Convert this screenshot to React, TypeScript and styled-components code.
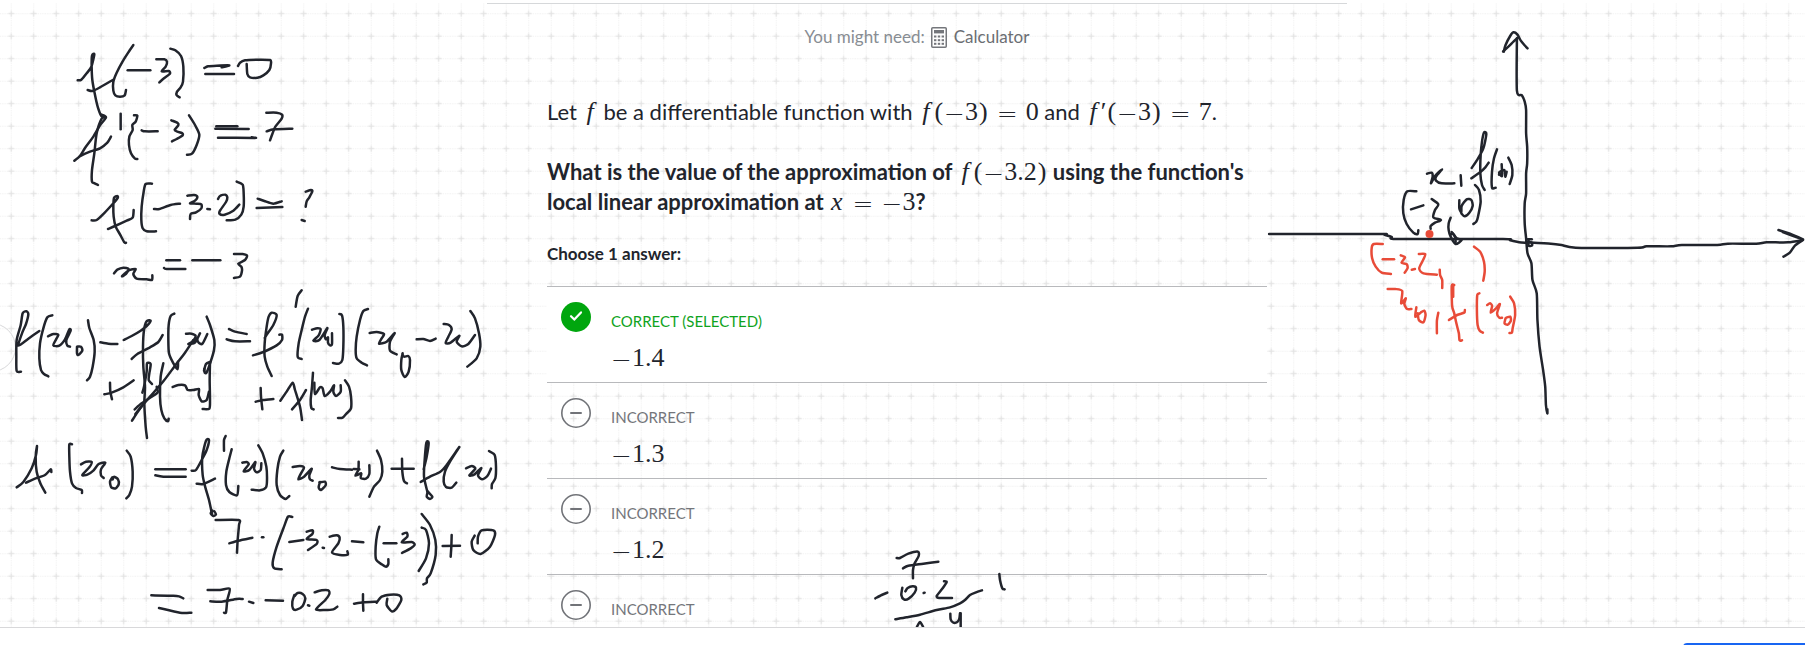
import React from 'react';
import styled, { createGlobalStyle } from 'styled-components';

const ink = '#21242c';
const red = '#e84b38';

const GlobalStyle = createGlobalStyle`
  *, *::before, *::after { box-sizing: border-box; }
  body {
    margin: 0;
    background: #fff;
    color: ${ink};
    font-family: Lato, 'Liberation Sans', sans-serif;
  }
`;

const Page = styled.div`
  display: flex;
  flex-direction: column;
  height: 100vh;
  overflow: hidden;
`;

const Board = styled.main`
  position: relative;
  flex: 1;
  min-height: 0;
  overflow: hidden;
  padding: 3px 0 0 29px;
  border-bottom: 1px solid #d8d8da;
`;

const Backdrop = styled.svg`
  position: absolute;
  inset: 3px 0 0 0;
  width: 100%;
  height: 100%;
`;

const Ink = styled.svg`
  position: absolute;
  top: 0;
  left: 0;
  width: 100%;
  height: 100%;
  pointer-events: none;
  fill: none;
  stroke-linecap: round;
  stroke-linejoin: round;
`;

const SideHandle = styled.button`
  position: absolute;
  top: 323px;
  left: -33px;
  width: 49px;
  height: 49px;
  border: 1px solid #d8d8da;
  border-radius: 50%;
  background: transparent;
  padding: 0;
`;

const Exercise = styled.article`
  position: relative;
  max-width: 860px;
  margin: 0 auto;
  padding: 21px 80px 0 60px;
  border-top: 1px solid #d6d8da;
`;

const Tools = styled.p`
  display: flex;
  justify-content: center;
  align-items: center;
  gap: 6px;
  margin: 0 0 48px;
  padding-left: 20px;
  font-size: 17px;
  line-height: 24px;
  color: #888d93;
`;

const ToolName = styled.span`
  display: inline-flex;
  align-items: center;
  gap: 7px;
  color: #6b6e73;
`;

const Question = styled.p<{ $strong?: boolean }>`
  margin: 0 0 ${(p) => (p.$strong ? 25 : 30)}px;
  font-size: 22px;
  line-height: 30px;
  font-weight: ${(p) => (p.$strong ? 700 : 400)};
`;

const Math = styled.span`
  font-family: 'Liberation Serif', serif;
  font-size: 26px;
  line-height: 30px;
  font-weight: 400;
  white-space: nowrap;
`;

const Variable = styled.i<{ $f?: boolean }>`
  margin: 0 ${(p) => (p.$f ? 4 : 2)}px;
`;

const Paren = styled.span`
  margin: 0 1px;
`;

const Sign = styled.span<{ $relation?: boolean }>`
  margin: 0 ${(p) => (p.$relation ? 8 : 0)}px;
  font-family: 'DejaVu Sans', sans-serif;
  font-weight: 200;
  font-size: 25px;
  line-height: 1px;
  vertical-align: -2px;
`;

const Prompt = styled.h2`
  margin: 0 0 20px;
  font-size: 17px;
  line-height: 24px;
  font-weight: 700;
`;

const Choices = styled.ul`
  list-style: none;
  margin: 0;
  padding: 0;
  border-top: 1px solid #b8b9bc;
`;

const Choice = styled.li<{ $correct?: boolean }>`
  border-bottom: 1px solid #b8b9bc;
  background: ${(p) => (p.$correct ? '#fff' : 'transparent')};
`;

const ChoiceButton = styled.button`
  display: flex;
  align-items: flex-start;
  gap: 20px;
  width: 100%;
  padding: 15px 14px 9px;
  border: 0;
  background: none;
  color: inherit;
  font: inherit;
  text-align: left;
`;

const ChoiceText = styled.span`
  display: flex;
  flex-direction: column;
  gap: 12px;
  padding-top: 9px;
`;

const Verdict = styled.span<{ $correct?: boolean }>`
  font-size: 15px;
  line-height: 20px;
  color: ${(p) => (p.$correct ? '#0fa31d' : '#74767b')};
`;

const Footer = styled.footer`
  display: flex;
  justify-content: flex-end;
  height: 17px;
  padding-top: 15px;
  background: #fff;
  overflow: hidden;
`;

const CheckBar = styled.button`
  flex: none;
  width: 122px;
  height: 40px;
  border: 0;
  border-radius: 4px 0 0 4px;
  background: #1865f2;
`;

const CalculatorIcon = () => (
  <svg width="16" height="21" viewBox="0 0 16 21" aria-hidden="true">
    <rect x="0.75" y="0.75" width="14.5" height="19.5" rx="1" fill="#fff" stroke="#74767b" strokeWidth="1.5" />
    <rect x="3" y="3" width="10" height="3.4" fill="#74767b" />
    {[8.5, 12.2, 15.8].map((y) =>
      [3, 6.8, 10.6].map((x) => <rect key={`${x}-${y}`} x={x} y={y} width="2.4" height="2" fill="#74767b" />),
    )}
  </svg>
);

const VerdictIcon = ({ correct }: { correct?: boolean }) => (
  <svg width="30" height="30" viewBox="0 0 30 30" fill="none" strokeLinecap="round" aria-hidden="true">
    {correct ? (
      <>
        <circle cx="15" cy="15" r="15" fill="#00a60e" />
        <path d="M10 14.2 L13.3 17.6 L20 10.4" stroke="#fff" strokeWidth="2.2" strokeLinejoin="round" />
      </>
    ) : (
      <>
        <circle cx="15" cy="15" r="14.2" stroke="#717378" strokeWidth="1.6" />
        <path d="M10 15 H20" stroke="#717378" strokeWidth="2" />
      </>
    )}
  </svg>
);

/* Turns a list of pen samples into a smooth curve through every one of them. */
function penPath(samples: string) {
  const pts = samples.split(' ').map((s) => s.split(',').map(Number));
  let d = `M${pts[0][0]} ${pts[0][1]}`;
  if (pts.length === 2) return `${d}L${pts[1][0]} ${pts[1][1]}`;
  for (let i = 0; i < pts.length - 1; i++) {
    const p0 = pts[i - 1] ?? pts[i];
    const p1 = pts[i];
    const p2 = pts[i + 1];
    const p3 = pts[i + 2] ?? p2;
    const k = 8;
    d += `C${p1[0] + (p2[0] - p0[0]) / k} ${p1[1] + (p2[1] - p0[1]) / k} ${p2[0] - (p3[0] - p1[0]) / k} ${p2[1] - (p3[1] - p1[1]) / k} ${p2[0]} ${p2[1]}`;
  }
  return d;
}

type Sheet = { x: number; y: number; zoomX: number; color: string; strokes: string[] };

/* Pen samples are taken at three units to the pixel, relative to each sheet's corner. */
const sheets: Sheet[] = [
  {
    x: 0, y: 0, zoomX: 3, color: ink,
    strokes: [
      // f(-3) = 0
      '233,241 244,239 260,220 274,200 283,163 276,167 275,200 277,240 284,280 293,320 304,348 316,352',
      '263,270 277,273 300,262 338,240',
      '400,135 385,157 368,184 350,218 340,245 340,272 346,286 360,290 374,286 378,270',
      '383,211 451,211',
      '469,178 493,178 501,185 497,200 485,214 506,213 510,221 492,235 478,247',
      '511,146 526,151 543,168 550,200 549,245 542,262 531,275 530,286 539,292',
      '613,204 624,199 650,197 688,196 665,202',
      '616,222 702,222',
      '714,198 720,188 735,181 775,179 810,180 813,190 808,210 790,226 772,233 750,232 742,222 740,192',
      // f'(-3) = 7
      '304,344 318,352 300,376 280,410 255,444 240,468 223,482',
      '316,352 305,356 290,400 283,460 276,510 276,545 284,550 294,555',
      '240,468 270,455 300,445 322,428 333,410',
      '362,341 362,388',
      '402,346 412,347 407,365 397,375 398,390 388,410 387,435 393,460 405,476 412,477',
      '425,391 435,394 473,394',
      '514,361 533,369 535,376 524,390 532,395 546,399 548,406 530,417 516,424',
      '567,346 585,375 598,404 590,435 576,461 561,464',
      '649,379 712,379', '646,386 746,387', '654,413 764,414 755,412',
      '799,338 830,338 846,344 845,356 826,380 817,402 810,421',
      '800,394 822,388 877,386',
      // f(-3.2) = ?
      '275,661 290,660 312,640 338,612 353,594 352,588 342,594 340,620 341,650 347,680 360,703 373,727 378,728',
      '324,687 345,678 380,662 398,653 401,630',
      '456,551 437,552 431,575 425,620 424,660 428,685 440,694 468,694',
      '462,627 478,627 512,615 540,611',
      '562,587 582,585 592,590 585,602 570,610 590,611 604,613 604,625 588,637 572,642 570,657',
      '622,627 630,628',
      '654,597 660,588 676,584 682,592 678,606 660,632 659,642 674,644 700,632 718,614',
      '710,545 728,554 731,580 731,620 724,644 706,659 680,661',
      '773,596 793,603 820,611 845,604', '770,624 847,621',
      '917,575 933,570 937,574 928,592 920,604 917,620', '905,660 914,663',
    ],
  },
  {
    x: 0, y: 200, zoomX: 3, color: ink,
    strokes: [
      // x = -3
      '342,220 352,209 370,203 386,207 378,222 366,229 385,212 407,207 400,222 410,236 440,238 456,240 457,226',
      '499,181 540,181', '492,204 500,207 556,207', '577,181 661,181',
      '702,162 728,162 741,167 735,180 715,191 724,200 726,212 720,230 702,234',
      // f(x0) - f(x) = f'(x)(x0 - x)
      '63,515 50,513 49,470 50,420 62,376 68,340 79,334 85,343 78,372 66,400 55,437 85,416 118,393',
      '157,346 142,352 130,385 120,430 118,475 123,510 132,522 145,529',
      '144,409 160,402 175,404 170,415 160,436 178,437 195,418 208,388 212,392 199,420 202,437 210,440',
      '231,440 243,440 247,452 235,465 231,460 231,440',
      '264,361 268,384 281,420 284,455 278,500 270,530 261,541',
      '301,427 325,431 352,432',
      '371,420 395,408 422,392 440,378 452,362 440,364 432,390 429,440 430,500 435,560 433,610 437,680 441,714',
      '395,477 412,462 450,442 475,426 488,405',
      '523,341 512,348 506,375 505,420 507,460 519,488 533,508 534,485',
      '558,401 575,401 587,408 578,425 565,432 585,428 600,400 592,418 598,430 608,430 622,402',
      '580,420 555,458 525,497 490,544 450,590 420,625 406,642',
      '620,350 630,375 643,420 642,450 632,485 620,517 614,518 613,506',
      '687,387 705,395 740,402', '680,418 705,424 750,424',
      '759,466 790,456 830,436 846,420 846,404 838,404',
      '794,414 803,400 820,375 830,345 815,338 806,350 800,380 794,430 794,470 802,500 815,528',
      '905,271 893,288 887,320',
      '924,326 915,350 905,390 896,430 893,470 905,477',
      '936,389 952,385 962,388 956,406 940,422 958,420 982,384 974,406 978,418 984,412 984,428 990,436 996,432 996,400',
      '1018,342 1026,346 1030,380 1030,440 1027,480 1017,491 999,489',
      '1104,327 1090,333 1080,360 1070,410 1067,450 1070,475 1085,488 1101,496',
      '1109,399 1130,396 1152,402 1145,415 1137,431 1160,425 1184,399 1170,425 1170,452 1190,463',
      '1208,460 1204,480 1204,510 1214,531 1226,515 1230,480 1225,468 1212,470 1207,462',
      '1250,418 1270,417 1290,423 1307,416',
      '1331,372 1347,375 1355,388 1345,410 1337,429 1352,428 1378,407 1370,425 1385,439 1405,432 1425,405',
      '1411,333 1425,355 1437,400 1441,440 1430,475 1402,500',
      // + f(x) on both sides
      '330,548 331,575 336,598', '313,583 335,578 370,562 401,541',
      '404,628 425,610 455,590 473,577 470,560',
      '427,578 432,560 440,515 441,490 452,492 448,520 446,540 456,552',
      '490,490 482,530 480,590 484,630 493,655 504,664 506,656',
      '396,662 410,640 424,620',
      '518,561 535,555 555,556 563,570 580,570 597,567 596,585 605,604 620,600 627,575',
      '630,486 629,540 630,600 628,626 608,627', '630,486 618,492 612,512',
      '782,564 783,590 787,628', '767,605 790,600 820,597',
      '841,602 860,575 878,548 885,570 900,620 906,660', '876,628 900,600 918,570',
      '939,518 936,560 932,600 934,624 941,628',
      '943,548 945,582 960,562 968,565 974,588 990,575 1002,556 1000,575 1008,588 1022,575 1022,556',
      '1035,541 1047,560 1053,590 1053,625 1040,640 1028,653 1014,654',
    ],
  },
  {
    x: 0, y: 400, zoomX: 3, color: ink,
    strokes: [
      // f(x0) = f'(x)(x0 - x) + f(x)
      '50,262 70,246 95,205 108,165 111,138 107,170 110,215 121,250 136,278', '78,248 105,236 135,225 152,208 154,216',
      '216,133 208,133 208,170 210,215 216,250 228,264 245,270 246,279',
      '243,193 258,185 275,186 268,202 247,225 262,224 280,212 296,192 316,188 303,208 303,226 311,234',
      '337,232 330,245 334,262 347,265 356,253 354,238 342,230 338,238',
      '380,152 392,170 398,215 396,260 388,285 379,295',
      '466,208 557,208', '466,226 490,230 557,230',
      '575,212 588,210 605,180 620,150 627,120 618,122 607,170 608,225 616,262 627,300 636,342',
      '590,251 610,252 645,236', '637,332 632,340 640,348 648,343 643,334',
      '677,108 672,120 672,152',
      '695,148 688,175 679,215 678,255 688,276 711,286 715,258',
      '727,188 740,186 746,193 731,214 748,210 766,186 762,206 770,217 782,210 784,190',
      '775,136 788,160 799,200 801,240 798,262 780,271 755,269',
      '850,152 840,170 832,210 830,255 840,285 856,297 868,288',
      '878,201 900,198 912,203 903,220 895,238 912,230 935,206 928,226 930,238 938,242',
      '958,247 975,245 977,256 963,270 956,262 960,246',
      '996,202 1020,207 1056,209',
      '1076,185 1075,210 1066,227 1084,220 1082,234 1098,236 1108,222 1108,196', '1061,207 1078,208',
      '1131,152 1143,180 1147,215 1140,240 1122,260 1108,290',
      '1206,176 1207,215 1212,243 1221,250', '1175,206 1241,206',
      '1271,208 1280,170 1286,128 1279,128 1274,180 1272,230 1282,275', '1283,276 1280,290 1290,297 1297,290 1284,275',
      '1262,246 1290,230 1320,216 1340,195 1378,141 1350,185 1335,215 1331,245 1338,261 1355,263 1369,248',
      '1398,205 1415,198 1426,206 1408,226 1422,224 1444,204 1434,226 1446,238 1462,228 1473,206',
      '1467,153 1484,165 1488,200 1486,235 1476,252 1475,265',
      // 7 . (-3.2 - (-3)) + 0
      '647,360 716,360 717,375 713,420 711,458', '688,430 715,422 757,413', '786,412 790,412',
      '877,351 864,350 852,380 830,440 818,488 823,505 845,508',
      '868,426 910,420',
      '920,395 938,391 937,402 920,417 950,420 950,432 924,450', '968,443 972,444',
      '989,410 1010,406 1019,413 1015,430 996,457 1020,465 1043,464 1042,454', '1056,424 1090,427',
      '1138,380 1132,400 1127,440 1128,478 1145,493 1158,500 1165,492 1165,478',
      '1151,430 1189,430',
      '1208,402 1220,398 1222,410 1205,427 1235,426 1244,434 1232,445 1206,459',
      '1265,383 1278,390 1287,430 1278,475 1256,513',
      '1265,342 1290,375 1306,420 1307,465 1292,520 1281,535 1280,548 1270,553',
      '1355,405 1354,440 1352,470', '1328,438 1380,437',
      '1424,407 1415,425 1420,450 1442,462 1470,440 1485,405 1480,391 1445,391 1434,410 1433,430',
      // = 7 . -0.2 + 0
      '454,586 520,587 537,589 550,595', '477,624 540,638 574,638',
      '623,570 660,570 689,566 682,600 678,637 672,638', '631,604 665,605 710,597 728,597', '747,605 760,609',
      '797,601 849,602', '883,585 877,605 879,626 890,629 908,618 916,595 908,582 893,579 884,588', '924,616 928,617',
      '944,577 965,571 985,571 988,582 976,600 948,628 975,630 1000,628 1012,620',
      '1089,583 1089,608 1090,632', '1062,611 1090,607 1130,605',
      '1130,608 1145,590 1170,584 1198,586 1204,600 1190,625 1175,634 1160,615 1162,596',
    ],
  },
  {
    x: 840, y: 520, zoomX: 3, color: ink,
    strokes: [
      // 7 x -0.2 carried out by hand
      '170,114 180,114 205,101 234,95 236,108 224,130 219,150 219,175', '189,145 205,137 250,131 295,125',
      '106,235 125,225 142,218',
      '187,203 184,225 192,238 206,236 224,218 228,203 218,199 203,204 196,214', '251,219 254,218',
      '312,184 320,186 308,205 290,228 298,234 336,234',
      '166,298 200,292 240,284 290,270 330,262 360,250 375,240 390,225 408,217 426,211',
      '231,320 240,306 249,320', '331,281 332,298 340,308 352,306 358,296 360,280', '362,280 362,322',
      '478,162 480,180 487,205 494,208',
    ],
  },
  {
    x: 1250, y: 0, zoomX: 2.825, color: ink,
    strokes: [
      // axes
      '54,702 365,702 380,704 400,711 420,717 715,717 735,721 760,727 780,728',
      '717,155 722,135 735,108 744,97 755,103 765,122 775,135 784,145', '715,154 730,140 745,124 756,114',
      '754,115 754,272 768,286 776,305 780,330 780,400 783,440 783,490 780,520 780,580 776,610 776,670 780,715 784,760 795,790 798,840 810,880 812,960 818,1040 828,1110 834,1160 836,1215 840,1240 840,1228',
      '780,727 850,731 880,735 920,743 1095,743 1120,739 1190,739 1220,735 1320,735 1350,731 1430,731 1460,727 1520,727 1562,720',
      '1493,690 1530,703 1562,718 1545,712 1505,696', '1562,720 1540,736 1525,758 1507,770',
      '784,718 796,718', '787,720 787,737 797,736 795,727 784,727',
    ],
  },
  {
    x: 1360, y: 120, zoomX: 3, color: ink,
    strokes: [
      // (x, f(x)) and (-3, 0)
      '201,161 215,158 218,170 213,190 225,168 246,148 228,170 228,182 245,190 283,190', '302,166 304,197',
      '335,144 350,122 370,85 379,42 372,38 366,65 362,105 361,160 366,195 374,210', '334,175 360,157 376,142 386,128',
      '411,88 402,115 396,155 396,203 407,203',
      '425,133 426,168 417,158 433,150 436,170 440,155', '417,164 426,160',
      '445,113 455,135 457,165 449,192',
      '169,214 142,214 131,240 130,280 140,312 160,338 173,342 175,331',
      '153,268 190,256', '215,237 235,253 225,270 220,292 243,300 225,308 212,318 212,326',
      '298,241 298,265 304,277 305,258 320,238 334,240 338,258 328,278 314,289 304,280',
      '345,195 357,210 362,245 354,290 349,305 340,312',
      '272,293 266,310 266,330 272,350 287,372 305,360 290,355 278,340 272,345', '275,336 285,350 287,366',
    ],
  },
  {
    x: 1250, y: 200, zoomX: 2.825, color: red,
    strokes: [
      // (-3.2, ) and (x0, f(x0))
      '375,132 350,132 344,142 345,175 355,200 372,218 398,222', '375,178 407,178',
      '426,166 438,172 428,188 442,192 445,205 437,218', '457,209 466,207',
      '477,162 495,162 490,178 478,205 490,220 528,224', '536,209 537,225 543,240 543,264',
      '633,140 650,155 661,185 663,215 659,242',
      '389,267 410,267 430,273 427,310 440,295 436,312 444,327 456,327',
      '470,322 467,350 482,338 492,332 496,345 490,367 477,360 474,340',
      '532,338 528,362 528,400',
      '577,255 570,258 571,318 577,340 583,370 590,400 592,421 599,421', '574,256 574,290', '562,360 585,345 605,338 607,330',
      '648,280 642,285 641,330 643,375 649,392 658,398',
      '670,315 678,310 684,318 680,338 695,325 706,312 698,340 704,353 712,353',
      '722,355 719,370 728,374 737,362 735,350 724,353', '735,290 746,310 749,345 742,385 740,398 733,399',
    ],
  },
];

const Handwriting = () => (
  <Ink aria-hidden="true">
    {sheets.map((sheet, i) => (
      <g key={i} transform={`translate(${sheet.x} ${sheet.y}) scale(${1 / sheet.zoomX} ${1 / 3})`} stroke={sheet.color}>
        {sheet.strokes.map((s, j) => (
          <path key={j} d={penPath(s)} strokeWidth="2.5" vectorEffect="non-scaling-stroke" />
        ))}
      </g>
    ))}
    <circle cx="1429.5" cy="234" r="4" fill={red} />
  </Ink>
);

const Grid = () => (
  <Backdrop aria-hidden="true">
    <defs>
      <pattern id="grid" x="0" y="-0.5" width="22.5" height="22.5" patternUnits="userSpaceOnUse">
        <path d="M11.2 0V22.5M0 11.2H22.5" stroke="#f1f1f1" strokeDasharray="1.2 1" fill="none" />
        <path d="M11.2 8.2V14.2M8.2 11.2H14.2" stroke="#e3e3e3" strokeWidth="1.3" fill="none" />
      </pattern>
    </defs>
    <rect width="100%" height="100%" fill="url(#grid)" />
  </Backdrop>
);

const Minus = () => <Sign>−</Sign>;
const Equals = () => <Sign $relation>=</Sign>;

const Call = ({ prime, arg }: { prime?: boolean; arg: string }) => (
  <>
    <Variable $f>f</Variable>
    {prime && '′'}
    <Paren>(</Paren>
    <Minus />
    {arg}
    <Paren>)</Paren>
  </>
);

const choices: { value?: string; correct?: boolean }[] = [
  { value: '1.4', correct: true },
  { value: '1.3' },
  { value: '1.2' },
  {},
];

export default function App() {
  return (
    <Page>
      <GlobalStyle />
      <Board>
        <Grid />
        <Exercise>
          <Tools>
            You might need:
            <ToolName>
              <CalculatorIcon />
              Calculator
            </ToolName>
          </Tools>
          <Question>
            Let <Math><Variable $f>f</Variable></Math> be a differentiable function with{' '}
            <Math><Call arg="3" /><Equals />0</Math> and <Math><Call prime arg="3" /><Equals />7</Math>.
          </Question>
          <Question $strong>
            What is the value of the approximation of <Math><Call arg="3.2" /></Math> using the function's local
            linear approximation at <Math><Variable>x</Variable><Equals /><Minus />3</Math>?
          </Question>
          <Prompt>Choose 1 answer:</Prompt>
          <Choices>
            {choices.map((c, i) => (
              <Choice key={i} $correct={c.correct}>
                <ChoiceButton type="button">
                  <VerdictIcon correct={c.correct} />
                  <ChoiceText>
                    <Verdict $correct={c.correct}>{c.correct ? 'CORRECT (SELECTED)' : 'INCORRECT'}</Verdict>
                    {c.value && <Math><Minus />{c.value}</Math>}
                  </ChoiceText>
                </ChoiceButton>
              </Choice>
            ))}
          </Choices>
        </Exercise>
        <SideHandle type="button" aria-label="Open side panel" />
        <Handwriting />
      </Board>
      <Footer>
        <CheckBar type="button" aria-label="Next question" />
      </Footer>
    </Page>
  );
}
